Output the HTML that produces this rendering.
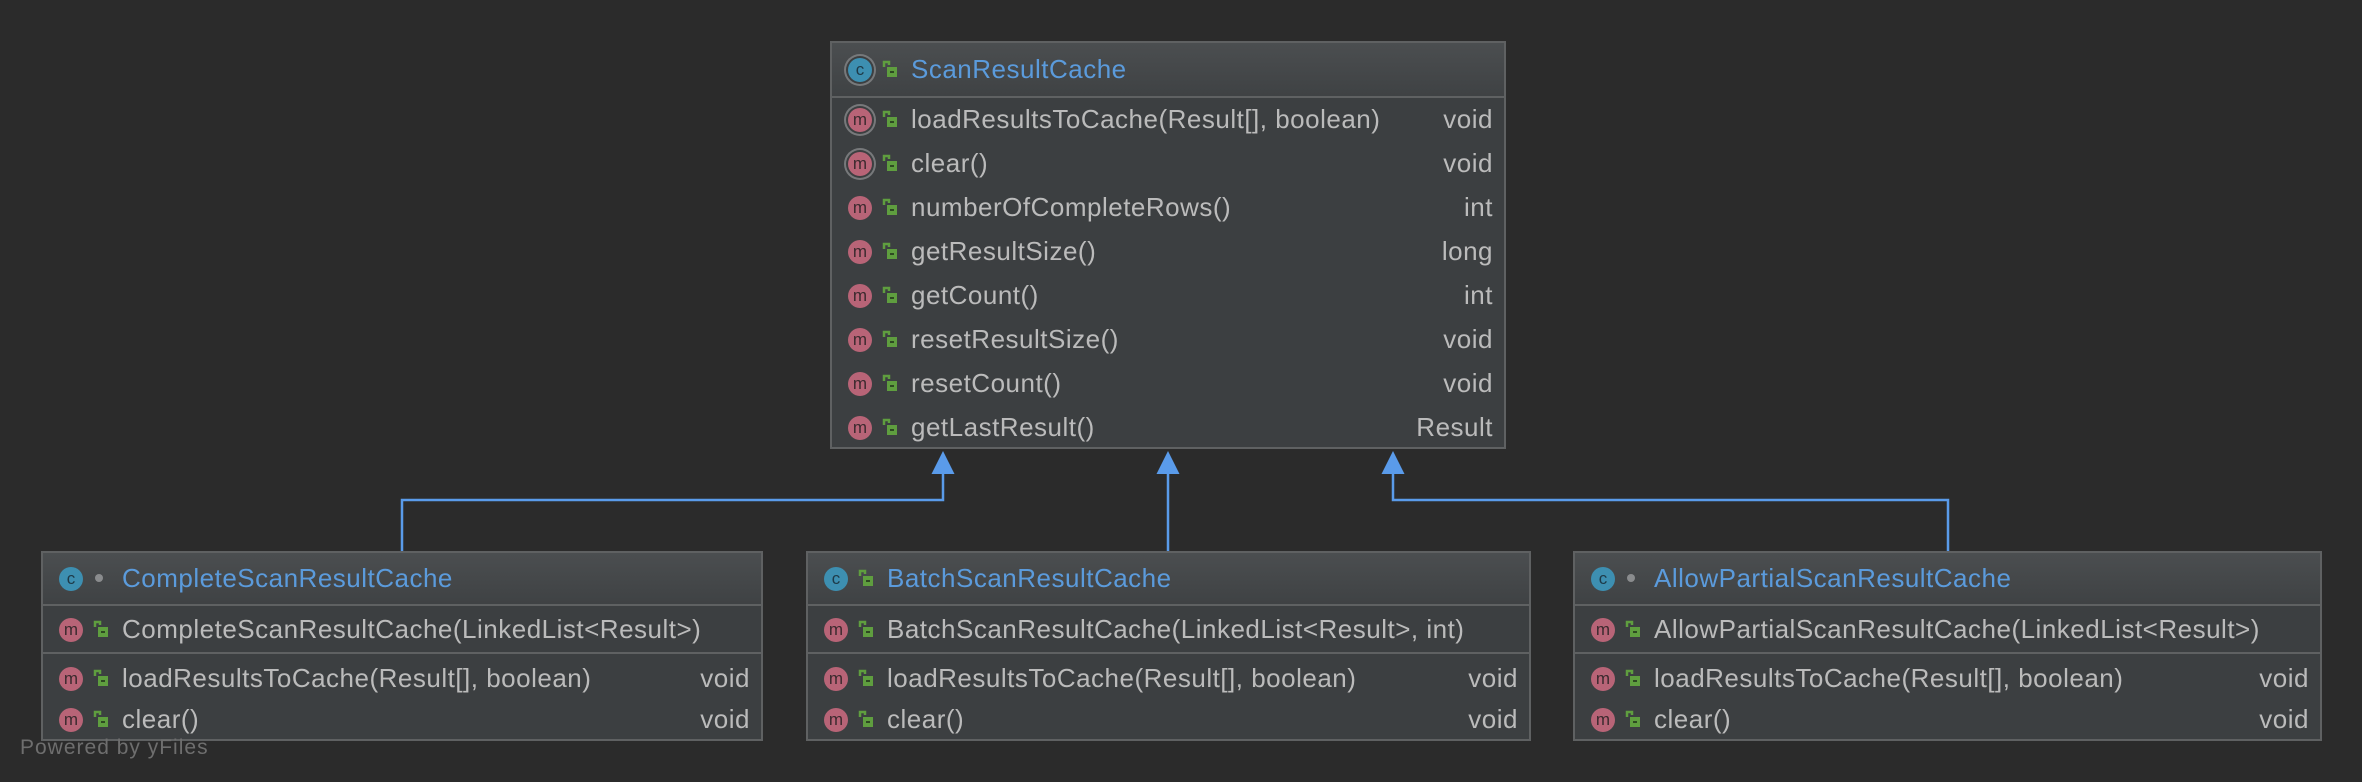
<!DOCTYPE html>
<html><head><meta charset="utf-8"><style>
body{margin:0;width:2362px;height:782px;background:#2b2b2b;overflow:hidden;font-family:"Liberation Sans",sans-serif;position:relative}
.box{position:absolute;background:#3c3f41;border:2px solid #5f6162;box-sizing:border-box}
.hdr{position:absolute;left:0;right:0;top:0;background:linear-gradient(#4b4e50,#3f4244);border-bottom:2px solid #5f6162;box-sizing:border-box}
.row{position:absolute;left:0;right:0;height:44px;line-height:44px;font-size:26px;letter-spacing:0.5px;color:#bbbbbb;white-space:nowrap}
.t{position:absolute;left:79px}
.r{position:absolute;right:11px}
.ttl{color:#5b9bdc}
.ic{position:absolute;top:11px;left:16px;width:24px;height:24px;border-radius:50%;color:#2b2b2b;font-size:17px;letter-spacing:0;line-height:23px;text-align:center}
.m{background:#b86477;color:#3b2a2e}
.c{background:#3d8fb1;color:#1e3a48}
.ab{box-shadow:0 0 0 2px #3c3f41,0 0 0 4px #77797b}
.lk{position:absolute;top:12px;left:50px;width:16px;height:20px}
.sep{position:absolute;left:0;right:0;height:2px;background:#5f6162}
</style></head><body>
<svg width="2362" height="782" style="position:absolute;left:0;top:0">
<g stroke="#5a9bea" stroke-width="2.5" fill="none">
<path d="M402 551V500H943V470"/><path d="M1168 551V470"/><path d="M1948 551V500H1393V470"/>
</g>
<g fill="#5a9bea">
<path d="M943 451L931.5 474H954.5Z"/><path d="M1168 451L1156.5 474H1179.5Z"/><path d="M1393 451L1381.5 474H1404.5Z"/>
</g>
</svg>
<svg width="0" height="0" style="position:absolute"><defs><g id="lock"><path d="M2 8V3H7V6" stroke="#5f9e3f" stroke-width="2.5" fill="none"/><rect x="5" y="8" width="10" height="10" fill="#5f9e3f"/><rect x="8" y="12" width="4" height="2" fill="#2e4a22"/></g></defs></svg>

<div class="box" style="left:830px;top:41px;width:676px;height:408px">
<div class="hdr" style="height:55px"><div class="row" style="top:4px"><span class="ic c ab">c</span><svg class="lk"><use href="#lock"/></svg><span class="t ttl">ScanResultCache</span></div></div>
<div class="row" style="top:54px"><span class="ic m ab">m</span><svg class="lk"><use href="#lock"/></svg><span class="t">loadResultsToCache(Result[], boolean)</span><span class="r">void</span></div>
<div class="row" style="top:98px"><span class="ic m ab">m</span><svg class="lk"><use href="#lock"/></svg><span class="t">clear()</span><span class="r">void</span></div>
<div class="row" style="top:142px"><span class="ic m">m</span><svg class="lk"><use href="#lock"/></svg><span class="t">numberOfCompleteRows()</span><span class="r">int</span></div>
<div class="row" style="top:186px"><span class="ic m">m</span><svg class="lk"><use href="#lock"/></svg><span class="t">getResultSize()</span><span class="r">long</span></div>
<div class="row" style="top:230px"><span class="ic m">m</span><svg class="lk"><use href="#lock"/></svg><span class="t">getCount()</span><span class="r">int</span></div>
<div class="row" style="top:274px"><span class="ic m">m</span><svg class="lk"><use href="#lock"/></svg><span class="t">resetResultSize()</span><span class="r">void</span></div>
<div class="row" style="top:318px"><span class="ic m">m</span><svg class="lk"><use href="#lock"/></svg><span class="t">resetCount()</span><span class="r">void</span></div>
<div class="row" style="top:362px"><span class="ic m">m</span><svg class="lk"><use href="#lock"/></svg><span class="t">getLastResult()</span><span class="r">Result</span></div>
</div>

<div class="box" style="left:41px;top:551px;width:722px;height:190px">
<div class="hdr" style="height:53px"><div class="row" style="top:3px"><span class="ic c">c</span><span style="position:absolute;left:52px;top:18px;width:8px;height:8px;border-radius:50%;background:#8a8c8e"></span><span class="t ttl">CompleteScanResultCache</span></div></div>
<div class="row" style="top:54px"><span class="ic m">m</span><svg class="lk"><use href="#lock"/></svg><span class="t">CompleteScanResultCache(LinkedList&lt;Result&gt;)</span></div>
<div class="sep" style="top:99px"></div>
<div class="row" style="top:103px"><span class="ic m">m</span><svg class="lk"><use href="#lock"/></svg><span class="t">loadResultsToCache(Result[], boolean)</span><span class="r">void</span></div>
<div class="row" style="top:144px"><span class="ic m">m</span><svg class="lk"><use href="#lock"/></svg><span class="t">clear()</span><span class="r">void</span></div>
</div>

<div class="box" style="left:806px;top:551px;width:725px;height:190px">
<div class="hdr" style="height:53px"><div class="row" style="top:3px"><span class="ic c">c</span><svg class="lk"><use href="#lock"/></svg><span class="t ttl">BatchScanResultCache</span></div></div>
<div class="row" style="top:54px"><span class="ic m">m</span><svg class="lk"><use href="#lock"/></svg><span class="t">BatchScanResultCache(LinkedList&lt;Result&gt;, int)</span></div>
<div class="sep" style="top:99px"></div>
<div class="row" style="top:103px"><span class="ic m">m</span><svg class="lk"><use href="#lock"/></svg><span class="t">loadResultsToCache(Result[], boolean)</span><span class="r">void</span></div>
<div class="row" style="top:144px"><span class="ic m">m</span><svg class="lk"><use href="#lock"/></svg><span class="t">clear()</span><span class="r">void</span></div>
</div>

<div class="box" style="left:1573px;top:551px;width:749px;height:190px">
<div class="hdr" style="height:53px"><div class="row" style="top:3px"><span class="ic c">c</span><span style="position:absolute;left:52px;top:18px;width:8px;height:8px;border-radius:50%;background:#8a8c8e"></span><span class="t ttl">AllowPartialScanResultCache</span></div></div>
<div class="row" style="top:54px"><span class="ic m">m</span><svg class="lk"><use href="#lock"/></svg><span class="t">AllowPartialScanResultCache(LinkedList&lt;Result&gt;)</span></div>
<div class="sep" style="top:99px"></div>
<div class="row" style="top:103px"><span class="ic m">m</span><svg class="lk"><use href="#lock"/></svg><span class="t">loadResultsToCache(Result[], boolean)</span><span class="r">void</span></div>
<div class="row" style="top:144px"><span class="ic m">m</span><svg class="lk"><use href="#lock"/></svg><span class="t">clear()</span><span class="r">void</span></div>
</div>

<div style="position:absolute;left:20px;top:736px;font-size:21px;color:#6e6e6e;letter-spacing:1px">Powered by yFiles</div>
</body></html>
